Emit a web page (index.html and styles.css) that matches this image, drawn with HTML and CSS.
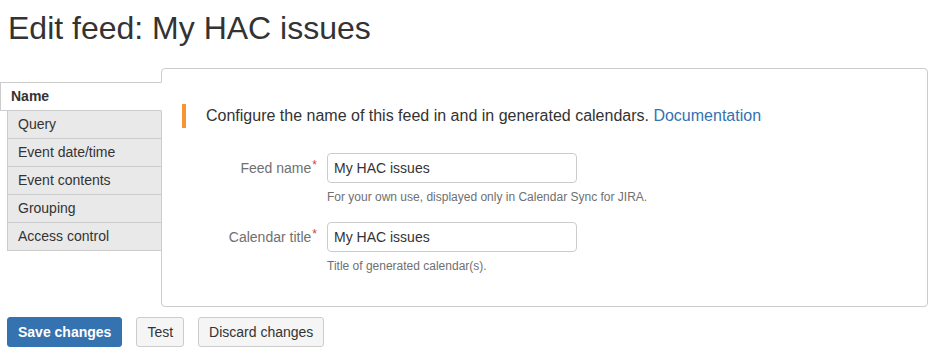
FILE: index.html
```html
<!DOCTYPE html>
<html lang="en">
<head>
    <meta charset="UTF-8">
    <title>Edit feed: My HAC issues</title>
    <link rel="stylesheet" href="styles.css">
</head>
<body>
    <div class="page">
        <h1>Edit feed: My HAC issues</h1>

        <div class="layout">
            <ul class="tabs">
                <li class="tab active">Name</li>
                <li class="tab">Query</li>
                <li class="tab">Event date/time</li>
                <li class="tab">Event contents</li>
                <li class="tab">Grouping</li>
                <li class="tab">Access control</li>
            </ul>

            <div class="panel">
                <p class="callout">Configure the name of this feed in and in generated calendars. <a href="#">Documentation</a></p>

                <div class="field">
                    <div class="field-row">
                        <label for="feedName">Feed name<span class="req">*</span></label>
                        <input id="feedName" type="text" value="My HAC issues">
                    </div>
                    <div class="help">For your own use, displayed only in Calendar Sync for JIRA.</div>
                </div>

                <div class="field">
                    <div class="field-row">
                        <label for="calTitle">Calendar title<span class="req">*</span></label>
                        <input id="calTitle" type="text" value="My HAC issues">
                    </div>
                    <div class="help">Title of generated calendar(s).</div>
                </div>
            </div>
        </div>

        <div class="actions">
            <button class="btn primary">Save changes</button>
            <button class="btn">Test</button>
            <button class="btn">Discard changes</button>
        </div>
    </div>
</body>
</html>
```

FILE: styles.css
```css
body {
    margin: 0;
    font-family: "Liberation Sans", Arial, sans-serif;
    font-size: 14px;
    color: #333;
    background: #fff;
}
.page {
    padding: 0 9px 0 7px;
}
h1 {
    margin: 11px 0 0 1px;
    font-size: 32px;
    font-weight: normal;
    line-height: 35px;
    color: #333;
}
.layout {
    display: flex;
    margin-top: 22px;
}
.tabs {
    list-style: none;
    margin: 14px -1px 0 0;
    padding: 0;
    width: 155px;
    flex: none;
    position: relative;
    z-index: 1;
}
.tab {
    box-sizing: border-box;
    height: 29px;
    line-height: 27px;
    margin-bottom: -1px;
    padding: 0 10px;
    background: #e9e9e9;
    border: 1px solid #ccc;
}
.tab.active {
    margin-left: -7px;
    background: #fff;
    border-right-color: #fff;
    font-weight: bold;
    position: relative;
    z-index: 1;
}
.panel {
    flex: 1;
    border: 1px solid #ccc;
    border-radius: 4px;
    padding: 20px 20px 15px;
}
.callout {
    margin: 15px 0 25px;
    padding-left: 20px;
    border-left: 4px solid #f89434;
    font-size: 16px;
    line-height: 24px;
}
.callout a {
    color: #3572b0;
    text-decoration: none;
}
.field {
    margin-bottom: 17px;
}
.field-row {
    display: flex;
    align-items: center;
}
.field-row label {
    width: 135px;
    padding-right: 10px;
    text-align: right;
    color: #707070;
    line-height: 16px;
}
.req {
    color: #d04437;
    font-size: 12px;
    vertical-align: top;
    line-height: 10px;
    margin-left: 1px;
}
.field-row input {
    box-sizing: border-box;
    width: 250px;
    height: 30px;
    padding: 0 6px;
    border: 1px solid #ccc;
    border-radius: 4px;
    font-family: inherit;
    font-size: 14px;
    color: #333;
}
.help {
    margin: 6px 0 0 145px;
    font-size: 12px;
    line-height: 16px;
    color: #707070;
}
.actions {
    display: flex;
    gap: 14px;
    margin-top: 10px;
}
.btn {
    height: 30px;
    padding: 0 10px;
    border: 1px solid #ccc;
    border-radius: 3px;
    background: #f5f5f5;
    font-family: inherit;
    font-size: 14px;
    color: #333;
    cursor: pointer;
}
.btn.primary {
    background: #3572b0;
    border-color: #3572b0;
    color: #fff;
    font-weight: bold;
}
```
